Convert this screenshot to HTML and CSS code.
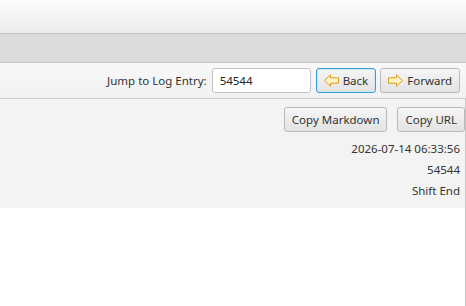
FILE: index.html
```html
<!DOCTYPE html>
<html>
<head>
    <link rel="stylesheet" href="styles.css">
</head>
<body>
    <div class="titlebar"></div>
    <div class="band"></div>

    <!-- navigation between log entries -->
    <div class="toolbar">
        <label class="jump-label" for="entry">Jump to Log Entry:</label>
        <input type="text" id="entry" class="entry-input" value="54544" />
        <button class="btn btn-focused">
            <svg class="arrow" width="15" height="13" viewBox="0 0 15 13">
                <path d="M0.5 6.5 L6.5 0.8 L6.5 3.8 L14.5 3.8 L14.5 9.2 L6.5 9.2 L6.5 12.2 Z" fill="#fff3c4" stroke="#d99a1e" stroke-width="1" stroke-linejoin="round"/>
            </svg>
            Back
        </button>
        <button class="btn">
            <svg class="arrow" width="15" height="13" viewBox="0 0 15 13">
                <path d="M14.5 6.5 L8.5 0.8 L8.5 3.8 L0.5 3.8 L0.5 9.2 L8.5 9.2 L8.5 12.2 Z" fill="#fff3c4" stroke="#d99a1e" stroke-width="1" stroke-linejoin="round"/>
            </svg>
            Forward
        </button>
    </div>

    <div class="content">
        <div class="details">
            <div class="actions">
                <button class="btn">Copy Markdown</button>
                <button class="btn">Copy URL</button>
            </div>
            <p class="field">2026-07-14 06:33:56</p>
            <p class="field">54544</p>
            <p class="field">Shift End</p>
        </div>
    </div>
</body>
</html>
```

FILE: styles.css
```css
html, body {
    margin: 0;
    height: 100%;
}

body {
    font-family: "Noto Sans", "Open Sans", sans-serif;
    font-size: 11.5px;
    color: #333;
    background-color: #fff;
    display: flex;
    flex-direction: column;
}

.titlebar {
    height: 33px;
    background: linear-gradient(#fbfbfb, #ececec);
    border-bottom: 1px solid #c2c2c2;
}

.band {
    height: 28px;
    background-color: #dcdcdc;
    border-bottom: 1px solid #c6c6c6;
}

.toolbar {
    height: 35px;
    background: linear-gradient(#f8f8f8, #f1f1f1);
    border-bottom: 1px solid #c8c8c8;
    display: flex;
    align-items: center;
    justify-content: flex-end;
    padding-right: 6px;
}

.jump-label {
    margin-right: 5px;
}

.entry-input {
    width: 99px;
    height: 25px;
    box-sizing: border-box;
    border: 1px solid #c4c4c4;
    border-radius: 3px;
    padding: 0 7px;
    font-family: inherit;
    font-size: 11.5px;
    color: #222;
    background-color: #fff;
    margin-right: 5px;
}

.btn {
    height: 25px;
    box-sizing: border-box;
    border: 1px solid #b8b8b8;
    border-radius: 3px;
    background: linear-gradient(#f6f6f6, #e3e3e3);
    font-family: inherit;
    font-size: 11.5px;
    color: #333;
    padding: 0 7px;
    display: inline-flex;
    align-items: center;
    gap: 4px;
}

.toolbar .btn + .btn {
    margin-left: 4px;
}

.btn-focused {
    border-color: #3a9ed6;
    box-shadow: inset 0 0 0 1px #cbe6f5;
}

.arrow {
    display: block;
}

.content {
    flex: 1;
    border-right: 1px solid #c8c8c8;
}

.details {
    background-color: #f3f3f3;
    height: 109px;
    padding-top: 8px;
    box-sizing: border-box;
    text-align: right;
}

.actions {
    display: flex;
    justify-content: flex-end;
    gap: 10px;
    margin-bottom: 6px;
}

.field {
    margin: 0;
    line-height: 21px;
    padding-right: 5px;
}
```
